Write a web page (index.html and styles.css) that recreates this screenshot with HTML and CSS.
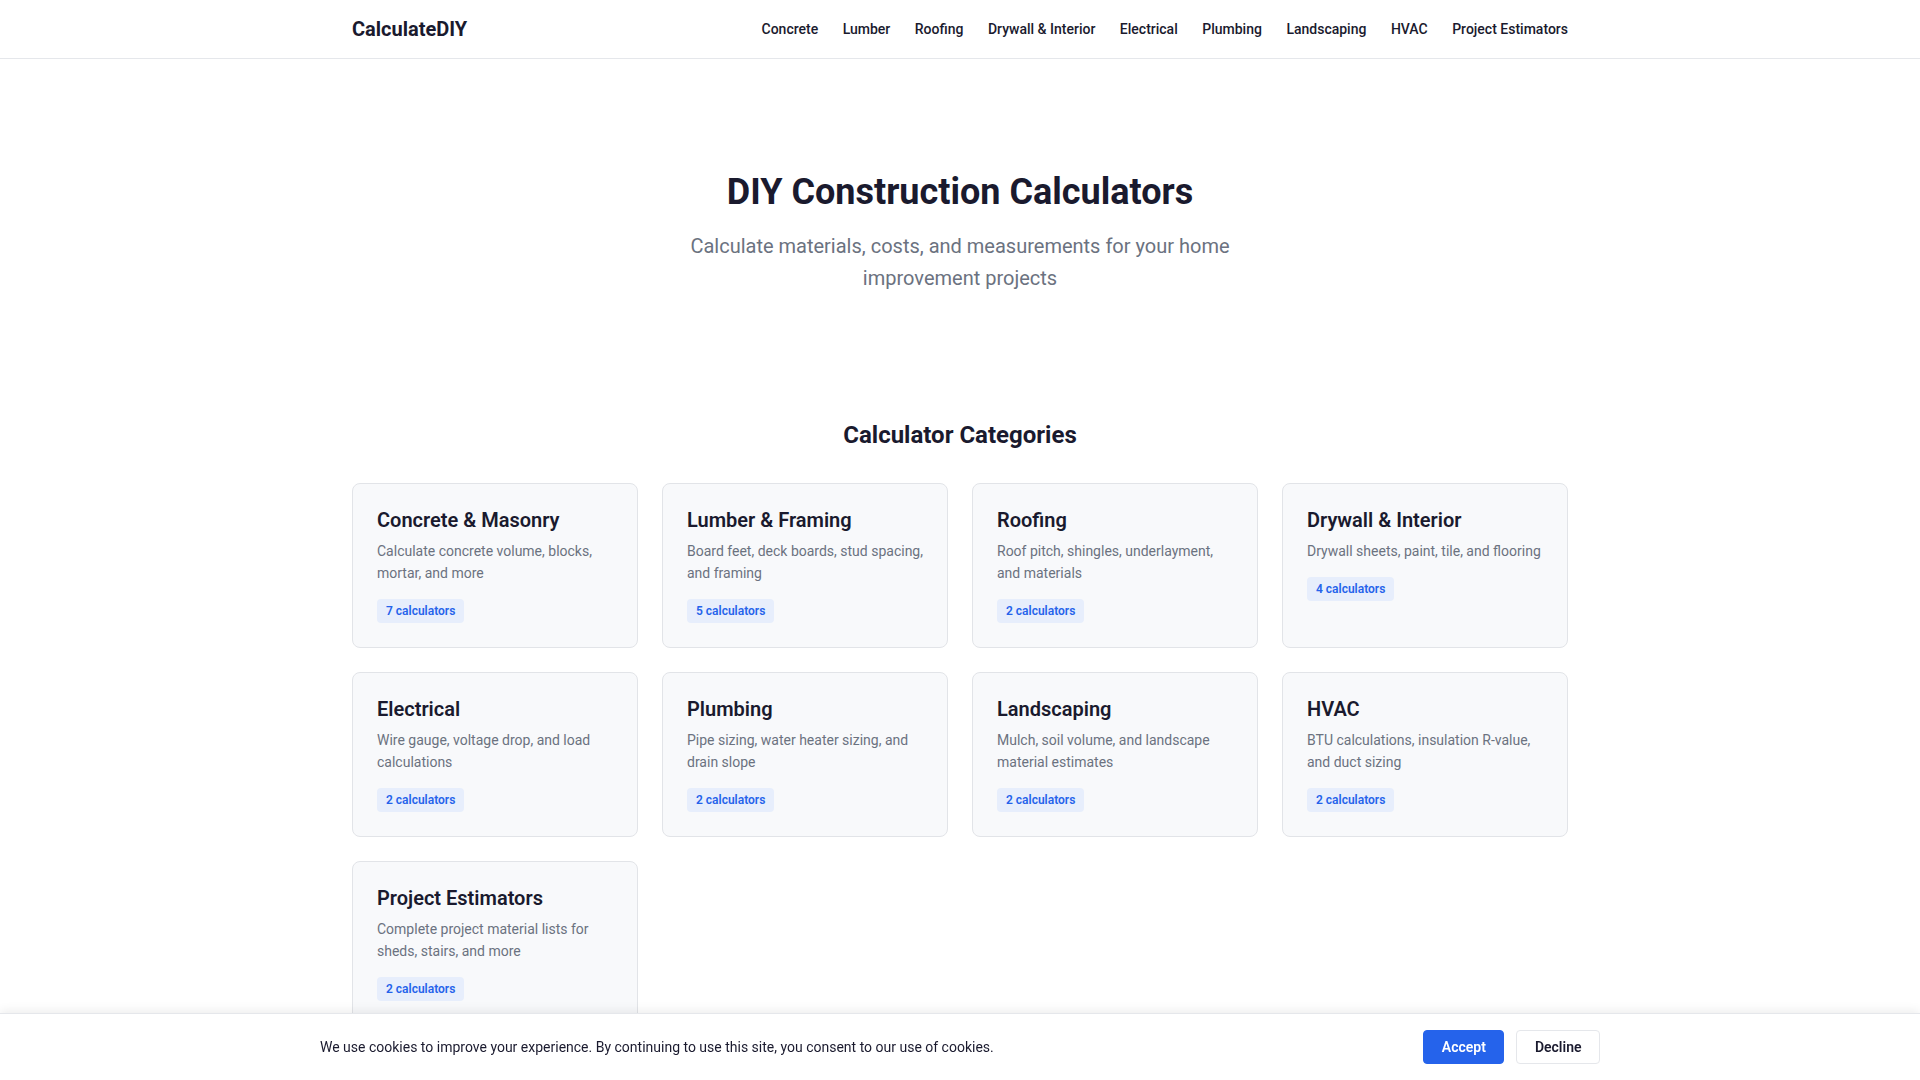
FILE: index.html
```html
<!DOCTYPE html>
<html lang="en">
<head>
<meta charset="utf-8">
<title>CalculateDIY - DIY Construction Calculators</title>
<link rel="stylesheet" href="styles.css">
</head>
<body>
<header class="site-header">
  <div class="header-inner">
    <a class="logo" href="#">CalculateDIY</a>
    <nav class="main-nav">
      <a href="#">Concrete</a>
      <a href="#">Lumber</a>
      <a href="#">Roofing</a>
      <a href="#">Drywall &amp; Interior</a>
      <a href="#">Electrical</a>
      <a href="#">Plumbing</a>
      <a href="#">Landscaping</a>
      <a href="#">HVAC</a>
      <a href="#">Project Estimators</a>
    </nav>
  </div>
</header>

<main>
  <section class="hero">
    <h1>DIY Construction Calculators</h1>
    <p>Calculate materials, costs, and measurements for your home improvement projects</p>
  </section>

  <section class="categories">
    <h2>Calculator Categories</h2>
    <div class="grid">
      <a class="card" href="#">
        <h3>Concrete &amp; Masonry</h3>
        <p>Calculate concrete volume, blocks, mortar, and more</p>
        <span class="badge">7 calculators</span>
      </a>
      <a class="card" href="#">
        <h3>Lumber &amp; Framing</h3>
        <p>Board feet, deck boards, stud spacing, and framing</p>
        <span class="badge">5 calculators</span>
      </a>
      <a class="card" href="#">
        <h3>Roofing</h3>
        <p>Roof pitch, shingles, underlayment, and materials</p>
        <span class="badge">2 calculators</span>
      </a>
      <a class="card" href="#">
        <h3>Drywall &amp; Interior</h3>
        <p>Drywall sheets, paint, tile, and flooring</p>
        <span class="badge">4 calculators</span>
      </a>
      <a class="card" href="#">
        <h3>Electrical</h3>
        <p>Wire gauge, voltage drop, and load calculations</p>
        <span class="badge">2 calculators</span>
      </a>
      <a class="card" href="#">
        <h3>Plumbing</h3>
        <p>Pipe sizing, water heater sizing, and drain slope</p>
        <span class="badge">2 calculators</span>
      </a>
      <a class="card" href="#">
        <h3>Landscaping</h3>
        <p>Mulch, soil volume, and landscape material estimates</p>
        <span class="badge">2 calculators</span>
      </a>
      <a class="card" href="#">
        <h3>HVAC</h3>
        <p>BTU calculations, insulation R-value, and duct sizing</p>
        <span class="badge">2 calculators</span>
      </a>
      <a class="card" href="#">
        <h3>Project Estimators</h3>
        <p>Complete project material lists for sheds, stairs, and more</p>
        <span class="badge">2 calculators</span>
      </a>
    </div>
  </section>
</main>

<div class="cookie-bar">
  <div class="cookie-inner">
    <p>We use cookies to improve your experience. By continuing to use this site, you consent to our use of cookies.</p>
    <div class="cookie-actions">
      <button class="btn btn-primary">Accept</button>
      <button class="btn btn-outline">Decline</button>
    </div>
  </div>
</div>
</body>
</html>
```

FILE: styles.css
```css
* { box-sizing: border-box; }

body {
  margin: 0;
  font-family: Roboto, "Liberation Sans", Arial, sans-serif;
  color: #1a1a2e;
  background: #ffffff;
}

a { color: inherit; text-decoration: none; }

.site-header {
  border-bottom: 1px solid #e5e7eb;
  background: #fff;
}

.header-inner {
  max-width: 1280px;
  margin: 0 auto;
  padding: 0 32px;
  height: 58px;
  display: flex;
  align-items: center;
  justify-content: space-between;
}

.logo {
  font-size: 20px;
  font-weight: 700;
  color: #1a1a2e;
}

.main-nav {
  display: flex;
  gap: 24.5px;
}

.main-nav a {
  font-size: 14px;
  font-weight: 500;
  color: #1a1a2e;
}

.hero {
  text-align: center;
  padding: 112px 32px 64px;
}

.hero h1 {
  margin: 0 0 16px;
  font-size: 36px;
  line-height: 1.2;
  font-weight: 700;
}

.hero p {
  margin: 0 auto;
  max-width: 600px;
  font-size: 20px;
  line-height: 32px;
  color: #6b7280;
}

.categories {
  max-width: 1280px;
  margin: 0 auto;
  padding: 63px 32px 80px;
}

.categories h2 {
  margin: 0 0 33px;
  text-align: center;
  font-size: 24px;
  line-height: 29px;
  font-weight: 700;
}

.grid {
  display: grid;
  grid-template-columns: repeat(4, 1fr);
  gap: 24px;
}

.card {
  display: flex;
  flex-direction: column;
  align-items: flex-start;
  background: #f8f9fb;
  border: 1px solid #e2e4e8;
  border-radius: 8px;
  padding: 24px 24px 24px;
}

.card h3 {
  margin: 0 0 8px;
  font-size: 20px;
  line-height: 24px;
  font-weight: 600;
}

.card p {
  margin: 0 0 15px;
  font-size: 14px;
  line-height: 22px;
  color: #6b7280;
}

.badge {
  display: inline-block;
  font-size: 12px;
  line-height: 16px;
  font-weight: 600;
  color: #2563eb;
  background: #e7eefc;
  border-radius: 4px;
  padding: 4px 9px;
}

.cookie-bar {
  position: fixed;
  left: 0;
  right: 0;
  bottom: 0;
  background: #fff;
  border-top: 1px solid #e5e7eb;
  box-shadow: 0 -2px 10px rgba(0, 0, 0, 0.08);
}

.cookie-inner {
  max-width: 1280px;
  margin: 0 auto;
  padding: 16px 0;
  display: flex;
  align-items: center;
  justify-content: space-between;
}

.cookie-inner p {
  margin: 0;
  font-size: 14px;
  color: #1a1a2e;
}

.cookie-actions {
  display: flex;
  gap: 12px;
}

.btn {
  font-family: inherit;
  font-size: 14px;
  font-weight: 600;
  height: 34px;
  padding: 0 17.5px;
  border-radius: 4px;
  cursor: pointer;
}

.btn-primary {
  background: #2563eb;
  color: #fff;
  border: 1px solid #2563eb;
}

.btn-outline {
  background: #fff;
  color: #1a1a2e;
  border: 1px solid #e5e7eb;
}
```
